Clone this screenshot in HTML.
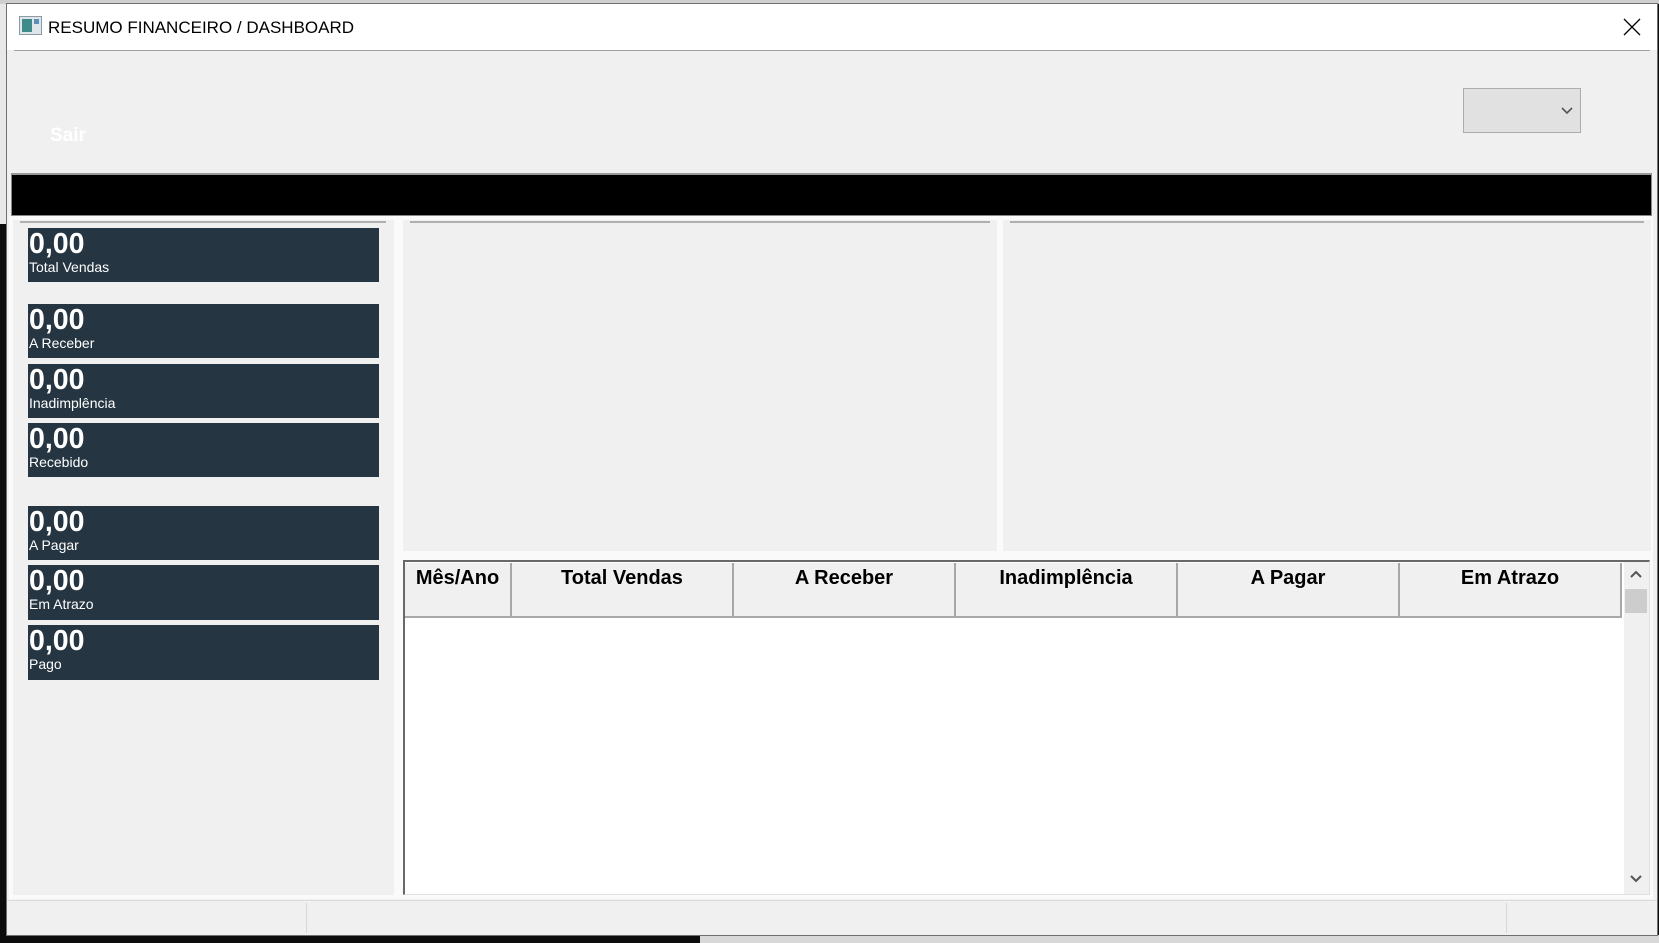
<!DOCTYPE html>
<html><head><meta charset="utf-8"><style>
*{margin:0;padding:0;box-sizing:border-box}
body{width:1659px;height:943px;overflow:hidden;background:#0c0c0c;font-family:"Liberation Sans",Arial,sans-serif;position:relative}
.a{position:absolute}
.card{position:absolute;left:28px;width:351px;background:#253541;color:#fff}
.card .v{position:absolute;left:1px;top:2px;font-size:28.5px;font-weight:bold;line-height:29px}
.card .l{position:absolute;left:1px;top:31px;font-size:14px;line-height:16px}
.th{position:absolute;top:563px;height:55px;background:#f0f0f0;border-right:2px solid #a8a8a8;border-bottom:2px solid #a8a8a8;font-weight:bold;font-size:20px;text-align:center;padding-top:4px;color:#000}
</style></head><body>
<div class="a" style="left:0;top:0;width:1659px;height:4px;background:#cfcfcf"></div>
<div class="a" style="left:0;top:4px;width:6px;height:220px;background:#e8e8e8"></div>
<div class="a" style="left:700px;top:935px;width:959px;height:8px;background:#d8d8d8"></div>
<div class="a" style="left:6px;top:3px;width:1652px;height:933px;background:#f0f0f0;border:1px solid #707070"></div>
<div class="a" style="left:7px;top:4px;width:1650px;height:46px;background:#fff"></div>
<div class="a" style="left:14px;top:50px;width:1636px;height:1px;background:#a0a0a0"></div>
<svg class="a" style="left:19px;top:16px" width="23" height="19"><rect x="0.5" y="0.5" width="22" height="18" fill="#dfe6ea" stroke="#8a9aa6"/><rect x="3" y="3" width="10" height="13" fill="#3f8a8a"/><rect x="15" y="3" width="5" height="5" fill="#5a8fb8"/></svg>
<div class="a" style="left:48px;top:18px;font-size:17px;color:#000">RESUMO FINANCEIRO / DASHBOARD</div>
<svg class="a" style="left:1623px;top:18px" width="18" height="18"><path d="M1 1L17 17M17 1L1 17" stroke="#000" stroke-width="1.3"/></svg>
<div class="a" style="left:50px;top:125px;font-size:19px;font-weight:bold;color:#fff">Sair</div>
<div class="a" style="left:1463px;top:88px;width:118px;height:45px;background:#e1e1e1;border:1px solid #adadad"></div>
<svg class="a" style="left:1560px;top:106px" width="14" height="10"><path d="M2 2L7 7L12 2" stroke="#555" stroke-width="1.6" fill="none"/></svg>
<div class="a" style="left:11px;top:173px;width:1641px;height:43px;background:#000;border:1px solid #888;border-top:2px solid #999"></div>
<div class="a" style="left:9px;top:216px;width:1644px;height:683px;background:#fafafa"></div>
<div class="a" style="left:13px;top:220px;width:381px;height:675px;background:#f0f0f0"></div>
<div class="a" style="left:20px;top:221px;width:366px;height:2px;background:#b0b0b0"></div>
<div class="a" style="left:403px;top:220px;width:594px;height:331px;background:#f0f0f0"></div>
<div class="a" style="left:410px;top:221px;width:580px;height:2px;background:#b0b0b0"></div>
<div class="a" style="left:1003px;top:220px;width:648px;height:331px;background:#f0f0f0"></div>
<div class="a" style="left:1010px;top:221px;width:634px;height:2px;background:#b0b0b0"></div>
<div class="card" style="top:228px;height:54px"><div class="v">0,00</div><div class="l">Total Vendas</div></div>
<div class="card" style="top:304px;height:54px"><div class="v">0,00</div><div class="l">A Receber</div></div>
<div class="card" style="top:364px;height:54px"><div class="v">0,00</div><div class="l">Inadimplência</div></div>
<div class="card" style="top:423px;height:54px"><div class="v">0,00</div><div class="l">Recebido</div></div>
<div class="card" style="top:506px;height:54px"><div class="v">0,00</div><div class="l">A Pagar</div></div>
<div class="card" style="top:565px;height:55px"><div class="v">0,00</div><div class="l">Em Atrazo</div></div>
<div class="card" style="top:625px;height:55px"><div class="v">0,00</div><div class="l">Pago</div></div>
<div class="a" style="left:403px;top:560px;width:1247px;height:335px;background:#fff;border-top:2px solid #696969;border-left:2px solid #696969;border-right:1px solid #e0e0e0;border-bottom:1px solid #e0e0e0"></div>
<div class="th" style="left:405px;width:107px">Mês/Ano</div>
<div class="th" style="left:512px;width:222px">Total Vendas</div>
<div class="th" style="left:734px;width:222px">A Receber</div>
<div class="th" style="left:956px;width:222px">Inadimplência</div>
<div class="th" style="left:1178px;width:222px">A Pagar</div>
<div class="th" style="left:1400px;width:222px">Em Atrazo</div>
<div class="a" style="left:1624px;top:562px;width:25px;height:332px;background:#f0f0f0"></div>
<div class="a" style="left:1625px;top:589px;width:22px;height:24px;background:#cdcdcd"></div>
<svg class="a" style="left:1628px;top:570px" width="16" height="10"><path d="M3 7L8 2L13 7" stroke="#555" stroke-width="2" fill="none"/></svg>
<svg class="a" style="left:1628px;top:874px" width="16" height="10"><path d="M3 2L8 7L13 2" stroke="#555" stroke-width="2" fill="none"/></svg>
<div class="a" style="left:7px;top:900px;width:1650px;height:1px;background:#dcdcdc"></div>
<div class="a" style="left:306px;top:903px;width:1px;height:30px;background:#d8d8d8"></div>
<div class="a" style="left:1506px;top:903px;width:1px;height:30px;background:#d8d8d8"></div>
</body></html>
